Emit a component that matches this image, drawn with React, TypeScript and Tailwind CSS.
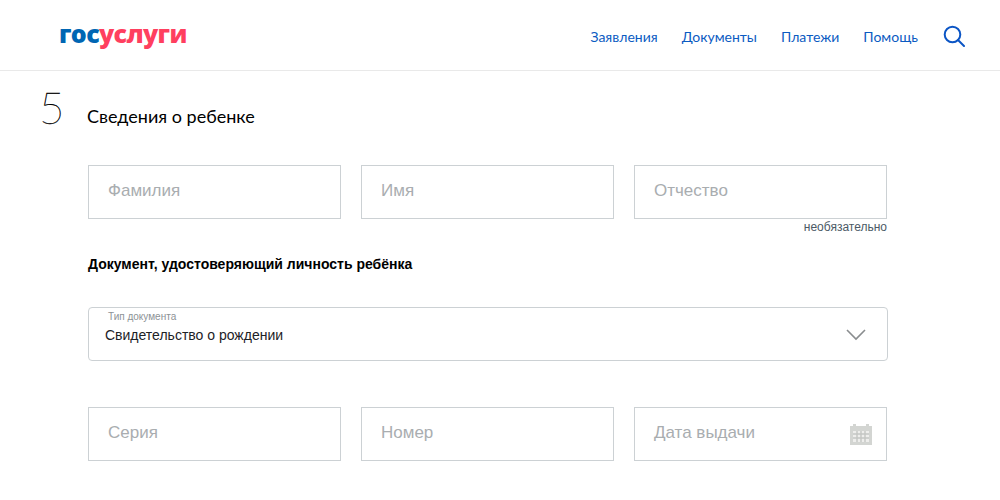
const NAV = ["Заявления", "Документы", "Платежи", "Помощь"];

function Field({ label, icon }: { label: string; icon?: React.ReactNode }) {
  return (
    <div className="flex h-[54px] w-[253px] items-center justify-between border border-[#ccd1d4] pl-[19px] pr-[14px] text-[17px] text-[#a9adb0]">
      <span className="mt-[-2px]">{label}</span>
      {icon}
    </div>
  );
}

function CalendarIcon() {
  return (
    <svg width="22" height="22" viewBox="0 0 22 22" className="mt-[-1px]">
      <path d="M0 3h3V1h3v2h10V1h3v2h3v19H0z" fill="#d3d5d2" />
      <path d="M3 8h16v11H3z" fill="#eeeeec" />
      <path d="M3 11h16M3 15h16M7 8v11M11 8v11M15 8v11" stroke="#c4c6c3" strokeWidth="1.4" />
    </svg>
  );
}

export default function App() {
  return (
    <div className="h-[500px] w-[1000px] overflow-hidden bg-white font-['Liberation_Sans',sans-serif] text-black">
      <header className="flex h-[71px] items-center justify-between border-b border-[#e9e9e9] pl-[59px] pr-[35px]">
        <div className="mt-[-3px] font-['Open_Sans',sans-serif] text-[25px] leading-none font-extrabold tracking-[-0.65px]">
          <span className="text-[#0066b3]">гос</span>
          <span className="text-[#ff3f5f]">услуги</span>
        </div>
        <nav className="mt-[2px] flex items-center font-['Lato',sans-serif] text-[14px] text-[#0b5bc2]">
          {NAV.map((item) => (
            <a key={item} className="mr-6">
              {item}
            </a>
          ))}
          <svg width="22" height="22" viewBox="0 0 22 22" fill="none" stroke="#0b55c5" strokeWidth="2" className="ml-[1px]">
            <circle cx="9.5" cy="9.5" r="7.8" />
            <path d="M15 15l6 6" strokeLinecap="round" />
          </svg>
        </nav>
      </header>

      <main className="pl-[39px]">
        <div className="flex h-[77px] items-start">
          <span className="mt-[12px] w-[48px] font-['Lato',sans-serif] text-[44px] leading-[48px] font-thin [-webkit-text-stroke:0.35px_#000]">5</span>
          <h2 className="mt-[33px] font-['Lato',sans-serif] text-[18px] leading-[24px] font-normal">Сведения о ребенке</h2>
        </div>

        <div className="ml-[49px] w-[799px]">
          <div className="mt-[17px] flex gap-5">
            <Field label="Фамилия" />
            <Field label="Имя" />
            <Field label="Отчество" />
          </div>
          <div className="mt-[1px] text-right text-[12px] leading-[14px] text-[#4c5a66]">необязательно</div>

          <div className="mt-[22px] text-[14px] leading-[16px] font-bold">Документ, удостоверяющий личность ребёнка</div>

          <div className="relative mt-[35px] mr-[-1px] flex h-[54px] items-center justify-between rounded-[4px] border border-[#ccd1d4] pr-[21px] pl-[16px]">
            <span className="absolute top-[3px] left-[19px] text-[10px] leading-[12px] text-[#8d9296]">Тип документа</span>
            <span className="mt-[3px] text-[14px] text-[#1d2226]">Свидетельство о рождении</span>
            <svg width="20" height="12" viewBox="0 0 20 12" fill="none" stroke="#8a8d8f" strokeWidth="1.6" className="mt-[2px]">
              <path d="M1 1l9 9 9-9" />
            </svg>
          </div>

          <div className="mt-[46px] flex gap-5">
            <Field label="Серия" />
            <Field label="Номер" />
            <Field label="Дата выдачи" icon={<CalendarIcon />} />
          </div>
        </div>
      </main>
    </div>
  );
}
